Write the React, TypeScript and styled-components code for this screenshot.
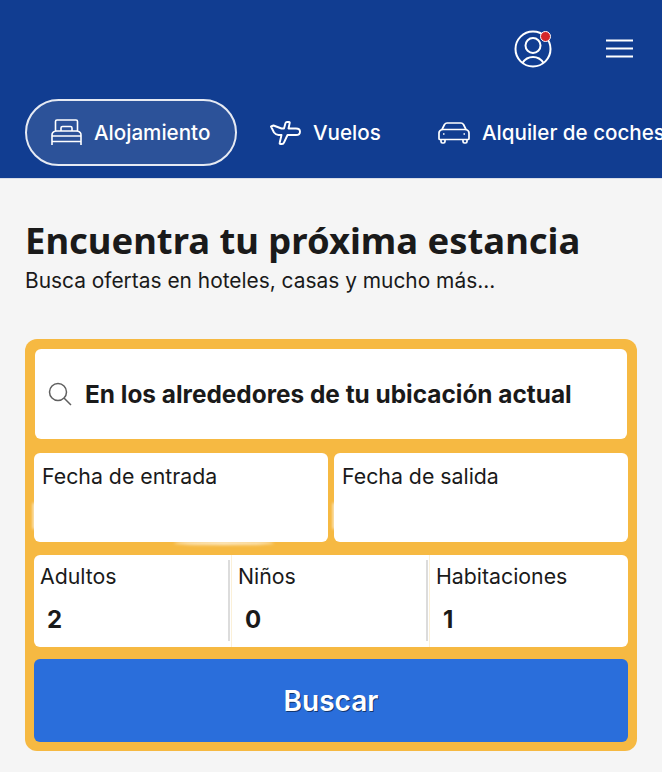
import React from 'react';
import styled, { createGlobalStyle } from 'styled-components';

const GlobalStyle = createGlobalStyle`
  html, body {
    margin: 0;
    padding: 0;
    background: #f5f5f5;
    font-family: Inter, "Liberation Sans", sans-serif;
    color: #1a1a1a;
  }
`;

const Page = styled.div`
  width: 662px;
  height: 772px;
  overflow: hidden;
`;

const Header = styled.header`
  height: 179px;
  box-sizing: border-box;
  background: #113d91;
  border-bottom: 1px solid #d9dde8;
  overflow: hidden;
`;

const TopBar = styled.div`
  height: 99px;
  display: flex;
  justify-content: flex-end;
  align-items: center;
  gap: 54px;
  padding: 30px 29px 32px 0;
  box-sizing: border-box;
`;

const IconButton = styled.div`
  position: relative;
  display: flex;
  align-items: center;
  color: #fff;
`;

const Badge = styled.span`
  position: absolute;
  top: 1px;
  right: 1px;
  box-sizing: border-box;
  width: 11px;
  height: 11px;
  background: #d4272a;
  border: 1.5px solid #fff;
  border-radius: 50%;
`;

const Tabs = styled.nav`
  display: flex;
  align-items: center;
  padding-left: 25px;
  white-space: nowrap;
`;

const Tab = styled.div<{ $active?: boolean; $width: number }>`
  flex: none;
  box-sizing: border-box;
  display: flex;
  align-items: center;
  gap: 12px;
  width: ${({ $width }) => $width}px;
  height: 67px;
  padding-left: ${({ $active }) => ($active ? 24 : 33)}px;
  border-radius: 34px;
  color: #fff;
  font-size: 20.6px;
  font-weight: 500;
  border: ${({ $active }) => ($active ? '2px solid #e6eaf3' : 'none')};
  background: ${({ $active }) => ($active ? '#2c5299' : 'transparent')};
`;

const Main = styled.main`
  padding: 38px 25px 0;
`;

const Title = styled.h1`
  margin: 0;
  font-family: "Noto Sans", sans-serif;
  font-size: 36.4px;
  line-height: 46px;
  font-weight: 700;
  color: #1a1a1a;
`;

const Subtitle = styled.p`
  margin: 5px 0 0;
  font-size: 20.9px;
  line-height: 26px;
  color: #1a1a1a;
`;

const SearchPanel = styled.form`
  margin-top: 45px;
  box-sizing: border-box;
  width: 612px;
  height: 412px;
  padding: 10px 9px 9px;
  background: #f6b942;
  border-radius: 12px;
  display: flex;
  flex-direction: column;
`;

const Destination = styled.div`
  height: 90px;
  margin: 0 1px;
  flex: none;
  display: flex;
  align-items: center;
  gap: 13px;
  padding-left: 13px;
  background: #fff;
  border-radius: 6px;
  font-size: 24.4px;
  font-weight: 700;
  color: #1a1a1a;
`;

const Dates = styled.div`
  margin-top: 14px;
  display: grid;
  grid-template-columns: 294px 294px;
  gap: 6px;
`;

// the white smudges along the field edges
const DateField = styled.div<{ $smudge?: boolean }>`
  position: relative;
  height: 89px;
  box-sizing: border-box;
  padding: 10px 8px;
  background: #fff;
  border-radius: 6px;
  font-size: 21.3px;
  line-height: 26px;

  &::after {
    content: '';
    position: absolute;
    left: -1px;
    top: 50px;
    width: 2px;
    height: 26px;
    background: #fff;
    filter: blur(1.5px);
  }

  ${({ $smudge }) =>
    $smudge &&
    `
    &::before {
      content: '';
      position: absolute;
      left: 140px;
      bottom: -3px;
      width: 100px;
      height: 4px;
      border-radius: 50%;
      background: #fff;
      opacity: 0.7;
      filter: blur(1.5px);
    }
  `}
`;

const Guests = styled.div`
  margin-top: 13px;
  height: 92px;
  display: grid;
  grid-template-columns: 198px 198px 198px;
  background: #fff;
  border-radius: 6px;
  overflow: hidden;
`;

const GuestField = styled.div<{ $divider?: boolean }>`
  position: relative;
  box-sizing: border-box;
  padding: 8px 7px 0 6px;
  font-size: 21.3px;
  line-height: 26px;

  ${({ $divider }) =>
    $divider &&
    `
    border-right: 1px solid #fbf0d8;

    &::after {
      content: '';
      position: absolute;
      right: 1px;
      top: 5px;
      bottom: 6px;
      width: 2px;
      background: #dcdcdc;
    }
  `}
`;

const GuestValue = styled.div`
  margin: 17px 0 0 7px;
  font-size: 24px;
  line-height: 28px;
  font-weight: 700;
`;

const SearchButton = styled.button`
  margin-top: 12px;
  height: 83px;
  width: 100%;
  flex: none;
  border: none;
  border-radius: 6px;
  background: #2a6edb;
  color: #fff;
  font-family: inherit;
  font-size: 28px;
  font-weight: 600;
  text-shadow: 1px 1px 0 #12366f;
`;

const UserIcon = () => (
  <svg width="38" height="38" viewBox="0 0 38 38" fill="none" stroke="currentColor" strokeWidth="2">
    <circle cx="19" cy="19" r="17.5" />
    <circle cx="19" cy="15.5" r="7.500" />
    <path d="M8.500 33C11 29 15 27 19 27s8 2 10.500 6" />
  </svg>
);

const MenuIcon = () => (
  <svg width="27" height="19" viewBox="0 0 27 19" stroke="currentColor" strokeWidth="2">
    <path d="M0 1.500h27M0 9.500h27M0 17.500h27" />
  </svg>
);

const BedIcon = () => (
  <svg width="31" height="27" viewBox="0 0 31 27" fill="none" stroke="currentColor" strokeWidth="1.6">
    <path d="M1 26v-10c0-1.500 1.500-3.500 3.500-4V2.500C4.500 1.500 5 1 6 1h19c1 0 1.500.5 1.500 1.500V12c2 .5 3.500 2.500 3.500 4v10" />
    <path d="M1 17h29M1 22.500h29M4.500 12h22" />
    <path d="M10 12V9c0-1 .5-1.500 1.500-1.500h8c1 0 1.500.5 1.500 1.500v3" />
  </svg>
);

const PlaneIcon = () => (
  <svg width="31" height="24" viewBox="0 0 31 24" fill="none" stroke="currentColor" strokeWidth="1.900" strokeLinejoin="round">
    <path d="M1 5.500l2.500-1 8 3h2.500L15.500 2c.3-.7.8-1 1.500-1h2c.6 0 .9.500.7 1l-1.200 5.500H26c2.500 0 4 1.500 4 3.200S28.500 14 26 14h-8.500L14 21.500c-.3 1-1 1.500-2 1.500h-1.500c-.7 0-1-.5-.8-1.200L11.500 14H8.500C6.500 14 5 12.800 4 11.500z" />
  </svg>
);

const CarIcon = () => (
  <svg width="32" height="22" viewBox="0 0 32 22" fill="none" stroke="currentColor" strokeWidth="1.700" strokeLinejoin="round">
    <path d="M1 16.500V11c0-2 1.500-3 3-3.500l2.500-5C7.200 1.500 8 1 9 1h14c1 0 1.800.5 2.500 1.500l2.500 5c1.500.5 3 1.500 3 3.500v5.500c0 .6-.4 1-1 1H2c-.6 0-1-.4-1-1z" />
    <path d="M4 7.500h24M3 17.500v2C3 20.500 3.500 21 4.500 21h1c1 0 1.500-.5 1.500-1.500v-2M25 17.500v2c0 1 .5 1.500 1.500 1.500h1c1 0 1.500-.5 1.500-1.500v-2" />
    <path d="M5 12h1.500M25.500 12H27" />
  </svg>
);

const SearchIcon = () => (
  <svg width="24" height="24" viewBox="0 0 24 24" fill="none" stroke="#5f5f5f" strokeWidth="1.500">
    <circle cx="10" cy="10" r="8.500" />
    <path d="M16 16l7 7" />
  </svg>
);

export default function App() {
  return (
    <Page>
      <GlobalStyle />
      <Header>
        <TopBar>
          <IconButton>
            <UserIcon />
            <Badge />
          </IconButton>
          <IconButton>
            <MenuIcon />
          </IconButton>
        </TopBar>
        <Tabs>
          <Tab $active $width={212}>
            <BedIcon />
            Alojamiento
          </Tab>
          <Tab $width={168}>
            <PlaneIcon />
            Vuelos
          </Tab>
          <Tab $width={300}>
            <CarIcon />
            Alquiler de coches
          </Tab>
        </Tabs>
      </Header>
      <Main>
        <Title>Encuentra tu próxima estancia</Title>
        <Subtitle>Busca ofertas en hoteles, casas y mucho más...</Subtitle>
        <SearchPanel>
          <Destination>
            <SearchIcon />
            En los alrededores de tu ubicación actual
          </Destination>
          <Dates>
            <DateField $smudge>Fecha de entrada</DateField>
            <DateField>Fecha de salida</DateField>
          </Dates>
          <Guests>
            <GuestField $divider>
              Adultos
              <GuestValue>2</GuestValue>
            </GuestField>
            <GuestField $divider>
              Niños
              <GuestValue>0</GuestValue>
            </GuestField>
            <GuestField>
              Habitaciones
              <GuestValue>1</GuestValue>
            </GuestField>
          </Guests>
          <SearchButton type="button">Buscar</SearchButton>
        </SearchPanel>
      </Main>
    </Page>
  );
}
